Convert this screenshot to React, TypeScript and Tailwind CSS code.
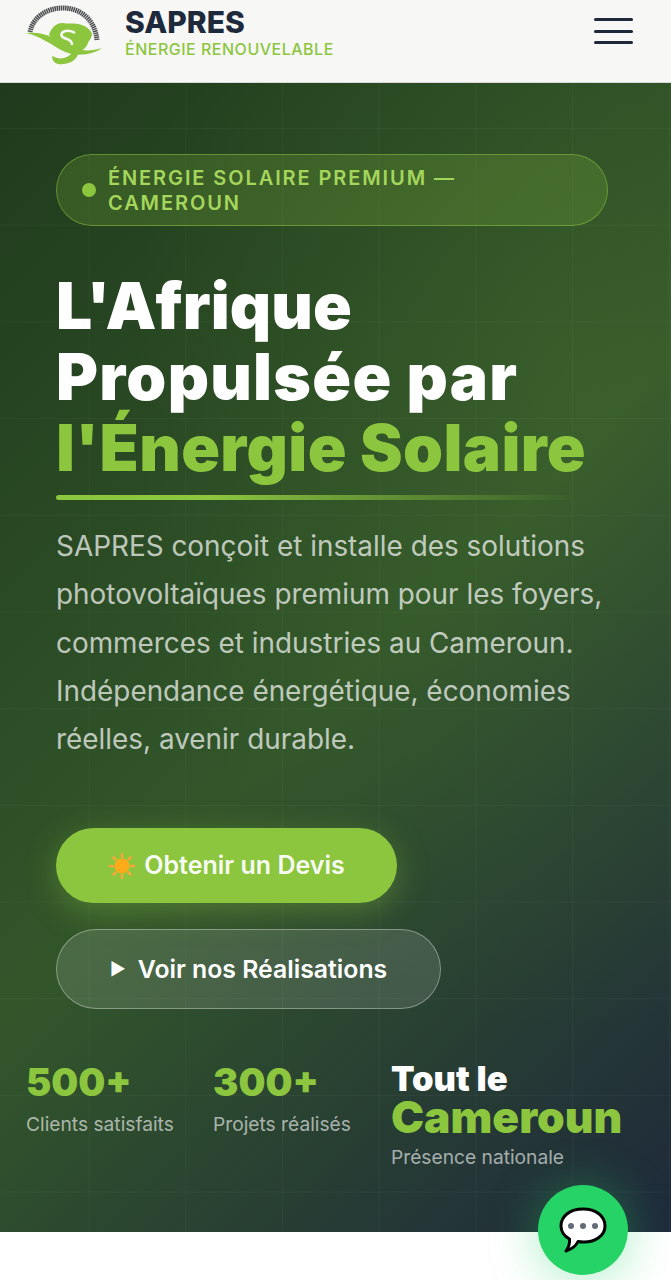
import React from "react";

const inter = "font-['Inter','Liberation_Sans',sans-serif]";
const head = "font-['Inter','Open_Sans',sans-serif]";

function Logo() {
  return (
    <svg width="80" height="66" viewBox="0 0 80 66" className="shrink-0">
      <path d="M5 30 C8 15 22 6 38 6 C56 6 70 18 72 38" fill="none" stroke="#4b4e50" strokeWidth="5" strokeDasharray="1.500 0.600" />
      <path d="M24 33 C26 26 31 21 37 21 C43 22 48 21 53 22 C59 23 66 27 67 32 C67 36 64 38 63 41 C61 46 58 48 54 50 L36 42 C30 39 26 36 24 33 Z" fill="#8cc63f" />
      <path d="M50 31 C46 28 39 28 37 31 C35 34 38 36 42 37 C45 38 47 40 47 43" fill="none" stroke="#f7f7f6" strokeWidth="2.500" />
      <path d="M1 31 C20 29 31 37 41 43 C52 49 65 50 77 46 C66 54 48 55 36 48 C26 42 14 34 1 31 Z" fill="#8cc63f" />
      <path d="M27 54 C34 58 42 57 47 51 L53 52 C51 60 41 63 33 62 C29 61 27 58 27 54 Z" fill="#8cc63f" />
    </svg>
  );
}

function Sun() {
  return (
    <svg width="28" height="28" viewBox="0 0 28 28" className="shrink-0">
      <g stroke="#f7a738" strokeWidth="2.600" strokeLinecap="round">
        <path d="M14 2v3M14 23v3M2 14h3M23 14h3M5.500 5.500l2 2M20.500 20.500l2 2M5.500 22.500l2-2M20.500 7.500l2-2" />
      </g>
      <circle cx="14" cy="14" r="7.500" fill="#ffab19" />
    </svg>
  );
}

function Chat() {
  return (
    <svg width="50" height="48" viewBox="0 0 50 48">
      <path d="M25 3 C38 3 47 10 47 20 C47 30 37 36 26 36 C24 36 22 36 20 35.500 C18 40 14 43 8 45 C11 41 12 38 11.500 33 C6 30 3 26 3 20 C3 10 12 3 25 3 Z" fill="#fff" stroke="#000" strokeWidth="3" strokeLinejoin="round" />
      <circle cx="13" cy="20" r="3" fill="#636b77" />
      <circle cx="25" cy="20" r="3" fill="#636b77" />
      <circle cx="37" cy="20" r="3" fill="#636b77" />
    </svg>
  );
}

function Stat({ value, label }: { value: string; label: string }) {
  return (
    <div className="flex flex-col">
      <div className={`${head} text-[38px] leading-[42px] font-black text-[#8cc63f]`}>{value}</div>
      <div className={`${inter} mt-[8px] text-[19.200px] leading-[26px] text-white/60`}>{label}</div>
    </div>
  );
}

export default function App() {
  return (
    <div className={`${inter} relative h-[1280px] w-[671px] overflow-hidden bg-white`}>
      <header className="flex h-[83px] items-start justify-between border-b border-[#d9d9d9] bg-[#f7f7f6] pl-[25px] pr-[38px]">
        <div className="flex items-start gap-[20px] pt-[2px]">
          <Logo />
          <div className="flex flex-col pt-[2px]">
            <div className={`${head} text-[30px] leading-[36px] font-extrabold text-[#1e293b]`}>SAPRES</div>
            <div className="-mt-[1px] text-[16px] leading-[20px] font-medium tracking-[0.500px] text-[#8cc63f]">ÉNERGIE RENOUVELABLE</div>
          </div>
        </div>
        <div className="flex w-[39px] flex-col gap-[8.500px] pt-[18px]">
          <span className="h-[3px] rounded-full bg-[#1e293b]" />
          <span className="h-[3px] rounded-full bg-[#1e293b]" />
          <span className="h-[3px] rounded-full bg-[#1e293b]" />
        </div>
      </header>

      <section className="h-[1149px] bg-[radial-gradient(ellipse_at_85%_25%,rgba(140,198,63,0.09),transparent_55%),linear-gradient(135deg,#1f3a1c_0%,#32562a_52%,#1e293b_100%)]">
        <div className="h-full bg-[linear-gradient(rgba(255,255,255,0.035)_1px,transparent_1px),linear-gradient(90deg,rgba(255,255,255,0.035)_1px,transparent_1px)] bg-[size:96.700px_96.700px] bg-[position:-8px_45px]">
          <div className="px-[56px] pt-[71px]">
            <div className="flex h-[72px] w-[552px] items-center gap-[12px] rounded-[36px] border border-[#8cc63f]/50 bg-[#8cc63f]/20 pl-[25px] pr-[60px]">
              <span className="h-[14px] w-[14px] shrink-0 rounded-full bg-[#8cc63f]" />
              <span className="pt-[2px] text-[20px] leading-[25px] font-semibold tracking-[1.900px] text-[#a5d65c]">ÉNERGIE SOLAIRE PREMIUM — CAMEROUN</span>
            </div>
            <h1 className={`${head} mt-[44px] text-[64px] leading-[71px] font-black text-white`}>
              <span className="tracking-[0.200px]">L'Afrique</span><br />
              <span className="tracking-[1.300px]">Propulsée par</span><br />
              <span className="tracking-[0.400px] text-[#8cc63f]">l'Énergie Solaire</span>
            </h1>
            <div className="mt-[12px] h-[5px] w-[520px] rounded-full bg-[linear-gradient(90deg,#8cc63f_0%,#8cc63f_30%,transparent_100%)]" />
            <p className="mt-[22px] w-[560px] text-[27.900px] leading-[48.250px] text-white/70">
              SAPRES conçoit et installe des solutions photovoltaïques premium pour les foyers, commerces et industries au Cameroun. Indépendance énergétique, économies réelles, avenir durable.
            </p>
            <button className="mt-[65px] flex h-[75px] w-[341px] items-center justify-center gap-[8px] rounded-[38px] bg-[#8cc63f] text-[25px] font-semibold text-white/95 shadow-[0_8px_32px_rgba(140,198,63,0.35)]">
              <Sun />
              Obtenir un Devis
            </button>
            <button className="mt-[26px] flex h-[80px] w-[385px] items-center justify-center gap-[12px] rounded-[40px] border border-white/35 bg-white/12 text-[24.800px] font-semibold text-white">
              <span className="text-[17px] leading-none">►</span>
              Voir nos Réalisations
            </button>
          </div>
          <div className="mt-[52px] flex items-start pl-[26px]">
            <div className="w-[187px]"><Stat value="500+" label="Clients satisfaits" /></div>
            <div className="w-[178px]"><Stat value="300+" label="Projets réalisés" /></div>
            <div className="flex flex-col">
              <div className={`${head} text-[34.500px] leading-[36px] font-black text-white`}>Tout le</div>
              <div className={`${head} text-[44.300px] leading-[40px] font-black text-[#8cc63f]`}>Cameroun</div>
              <div className="mt-[7px] text-[19.200px] leading-[26px] text-white/60">Présence nationale</div>
            </div>
          </div>
        </div>
      </section>

      <button className="absolute left-[538px] top-[1185px] flex h-[90px] w-[90px] items-center justify-center rounded-full bg-[#25d366] shadow-[0_4px_50px_rgba(37,211,102,0.4)]">
        <Chat />
      </button>
    </div>
  );
}
